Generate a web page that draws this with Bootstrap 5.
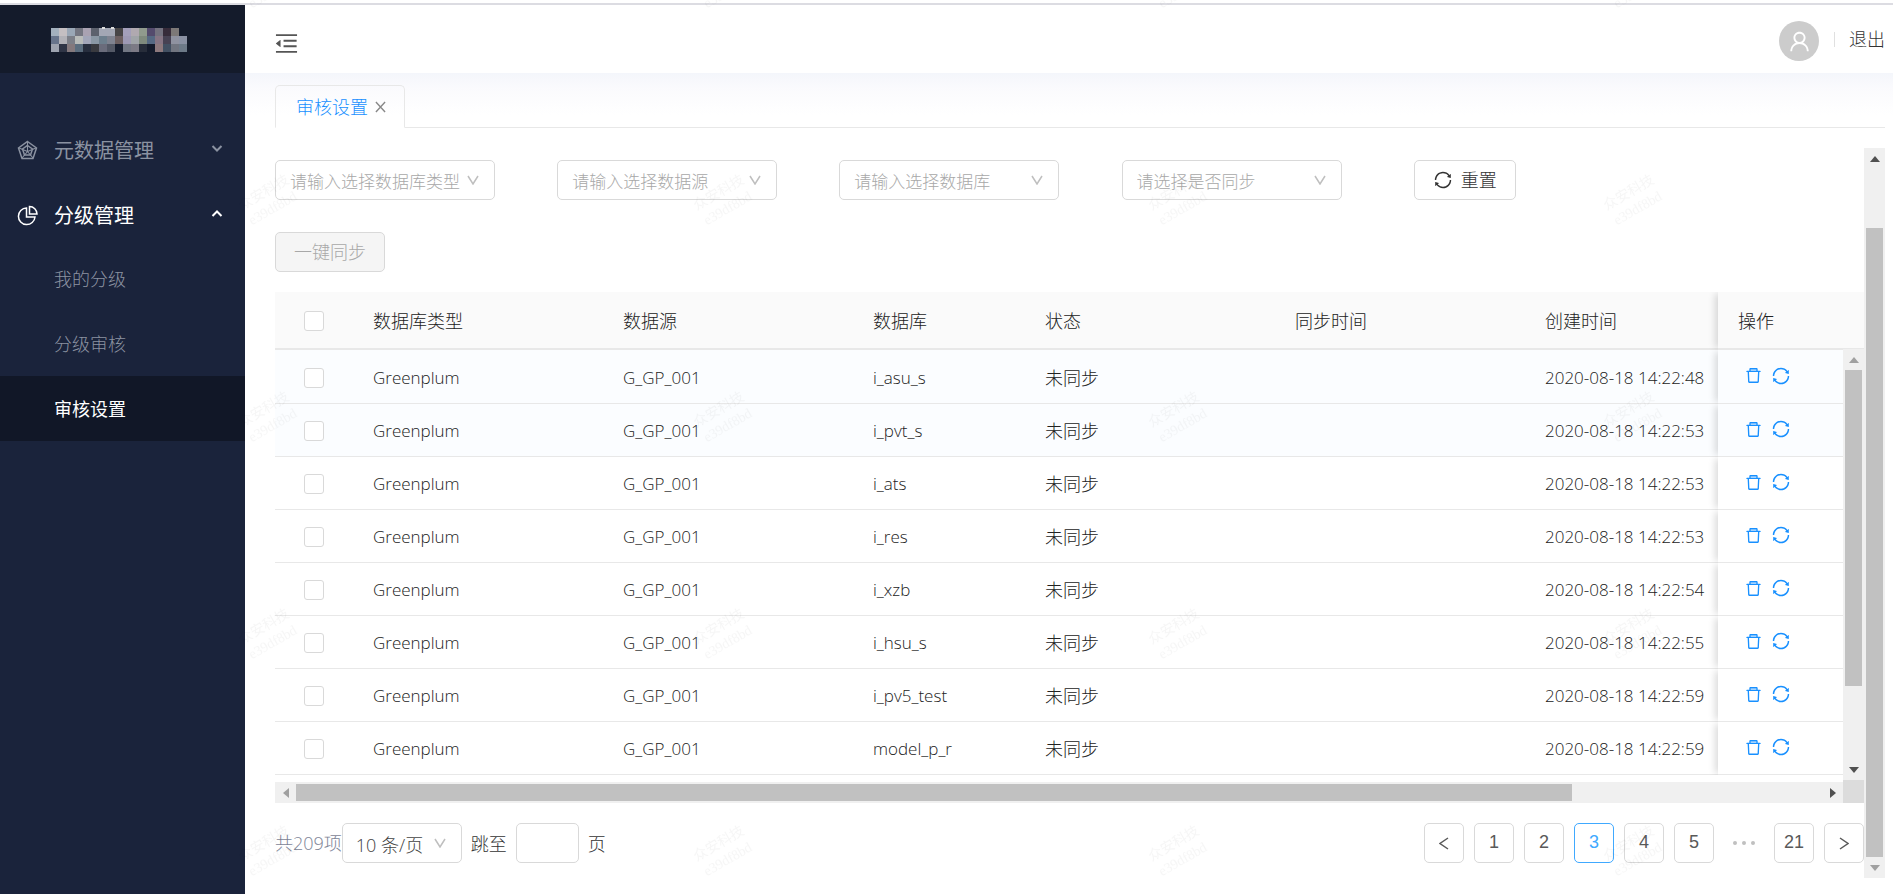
<!DOCTYPE html>
<html lang="zh-CN">
<head>
<meta charset="utf-8">
<meta name="viewport" content="width=device-width, initial-scale=1">
<title>审核设置</title>
<link href="https://cdn.jsdelivr.net/npm/bootstrap@5.3.0/dist/css/bootstrap.min.css" rel="stylesheet">
<style>
  :root { --line: #e8e8e8; --ctl: #d9d9d9; --blue: #1890ff; }
  body { font-family: "Open Sans", "Noto Sans CJK SC", sans-serif; font-size: 18px; font-weight: 300; line-height: 28px; color: #222; background: #fff; min-height: 100vh; overflow: hidden; }
  button, input, select { font: inherit; }
  svg { display: block; flex: none; }
  .app { min-height: 100vh; border-top: 2px solid #dcdce2; box-sizing: border-box; }
  .topgap { height: 3px; }
  .side { flex: 0 0 245px; background: #1a233b; }
  .brand { height: 68px; background: #141b2b; padding: 0 51px; }
  .menu { margin-top: 43px; }
  .menu a { height: 65px; padding: 0 22px 0 17px; color: #8b92a1; text-decoration: none; font-size: 18px; }
  .menu a.grp { font-size: 20px; font-weight: 400; padding-top: 4px; }
  .menu a.sub { padding-left: 54px; }
  .menu a.sel { background: #111727; }
  .menu a.on { color: #fff; font-weight: 400; }
  .mi { width: 37px; }
  .topbar { height: 68px; padding: 0 8px 0 28px; background: #fff; }
  .plain { border: 0; background: none; padding: 0; color: #555; }
  .avatar { width: 40px; height: 40px; border-radius: 50%; background: #ccc; color: #fff; }
  .vline { width: 1px; height: 15px; background: #e0e0e0; margin: 0 14px 0 15px; }
  .quit { color: #333; text-decoration: none; }
  .main { padding: 12px 8px 19px 30px; background: linear-gradient(#f4f6fb, #fafafd 14px, #fff 42px); }
  .tabs { border-bottom: 1px solid var(--line); height: 43px; }
  .tab1 { width: 130px; height: 43px; border: 1px solid var(--line); border-bottom-color: #fff; border-radius: 5px 5px 0 0; background: transparent; color: var(--blue); padding: 0 18px 0 20px; }
  .tab1 svg { color: #888; }
  .panel { margin-top: 20px; }
  .content { padding-top: 12px; }
  .filters { display: grid; grid-template-columns: repeat(4, 282fr) 460fr; }
  .ctl { height: 40px; border: 1px solid var(--ctl); border-radius: 5px; background-color: #fff; color: #444; padding: 0 14px; line-height: 38px; }
  select.ctl { padding: 2px 13px 0; appearance: none; background-image: url("data:image/svg+xml,%3Csvg xmlns='http://www.w3.org/2000/svg' width='12' height='10' fill='none' stroke='%23bfbfbf' stroke-width='1.5'%3E%3Cpath d='M1 1l5 8 5-8'/%3E%3C/svg%3E"); background-repeat: no-repeat; background-position: right 15px center; }
  select.pick { width: 220px; padding-left: 14px; font-size: 17px; color: #a8a8a8; }
  .resetbtn { margin-left: 10px; padding: 0 18px; color: #333; }
  .syncbtn { margin-top: 32px; width: 110px; background: #f5f5f5; color: #a8a8a8; }
  .gridbox { position: relative; margin-top: 20px; height: 490px; overflow: hidden; }
  .gridbox table { table-layout: fixed; width: 100%; border-collapse: separate; border-spacing: 0; }
  .gridbox th { height: 58px; background: #fafafa; border-bottom: 2px solid #e8e8e8; font-weight: 300; padding: 2px 20px 0; color: #222; }
  .gridbox td { height: 53px; border-bottom: 1px solid var(--line); padding: 2px 20px 0; font-size: 17px; white-space: nowrap; color: #222; }
  .gridbox tr:first-child td { height: 54px; }
  .gridbox td.st { font-size: 18px; }
  .gridbox tr.tint td { background: #fbfdff; }
  .gridbox .fixedcol { box-shadow: -5px 0 7px -2px rgba(0,0,0,.14); background: #fff; clip-path: inset(0 0 0 -12px); }
  .gridbox th.fixedcol { background: #fafafa; }
  .gridbox td.fixedcol { padding-left: 26px; }
  .gridbox td:first-child, .gridbox th:first-child { padding-left: 29px; }
  .tick { appearance: none; display: block; width: 20px; height: 20px; border: 1px solid var(--ctl); border-radius: 3px; background: #fff; margin: 0; }
  .act { color: var(--blue); border: 0; background: none; padding: 0; }
  .sb { background: #f0f0f0; color: #505050; }
  .sb-v { width: 21px; }
  .sb-h { height: 21px; }
  .sb .arr { width: 21px; height: 21px; flex: none; display: flex; align-items: center; justify-content: center; }
  .sb .dim { color: #a0a0a0; }
  .thumb { background: #c1c1c1; }
  .sb-v .thumb { width: 17px; }
  .sb-h .thumb { height: 17px; }
  .rail { position: absolute; right: 0; top: 57px; bottom: 2px; }
  .corner { width: 21px; height: 23px; background: #dcdcdc; margin-top: -2px; }
  .foot { margin-top: 20px; }
  .total { color: #7d8496; }
  .pg { width: 40px; height: 40px; padding: 0; font-family: "Liberation Sans", sans-serif; font-weight: 400; color: #595959; text-decoration: none; line-height: 36px; }
  .pg.now { border-color: #40a9ff; color: #40a9ff; }
  .joiner { margin: 0 9px; padding-top: 2px; color: #333; }
  .jump { width: 63px; }
  .wm { position: absolute; inset: 0; pointer-events: none; z-index: 5; }
</style>
</head>
<body>
<svg class="d-none">
  <symbol id="i-sync" viewBox="0 0 1024 1024"><path fill="currentColor" d="M168 504.2c1-43.7 10-86.1 26.9-126 17.3-41 42.1-77.7 73.7-109.4S337 212.3 378 195c42.4-17.9 87.4-27 133.9-27s91.5 9.1 133.8 27A341.5 341.5 0 0 1 755 268.8c9.9 9.9 19.2 20.4 27.8 31.4l-60.2 47a8 8 0 0 0 3 14.1l175.7 43c5 1.2 9.9-2.6 9.9-7.7l.8-180.9c0-6.7-7.7-10.5-12.9-6.3l-56.4 44.1C765.8 155.1 646.2 92 511.8 92 282.7 92 96.3 275.6 92 503.8a8 8 0 0 0 8 8.2h60c4.400 0 7.900-3.500 8-7.800zm756 7.800h-60c-4.400 0-7.900 3.500-8 7.800-1 43.700-10 86.100-26.900 126-17.300 41-42.100 77.800-73.700 109.400A342.450 342.450 0 0 1 512.100 856a342.240 342.240 0 0 1-243.200-100.800c-9.900-9.900-19.200-20.400-27.800-31.400l60.200-47a8 8 0 0 0-3-14.100l-175.700-43c-5-1.200-9.900 2.600-9.900 7.700l-.7 181c0 6.700 7.700 10.500 12.900 6.300l56.400-44.100C258.200 868.900 377.800 932 512.200 932c229.200 0 415.500-183.700 419.800-411.800a8 8 0 0 0-8-8.200z"/></symbol>
  <symbol id="i-del" viewBox="0 0 1024 1024"><path fill="currentColor" fill-opacity=".25" d="M352 184h320v72H352z"/><path fill="currentColor" d="M360 184h-8c4.400 0 8-3.600 8-8v8h304v-8c0 4.400 3.600 8 8 8h-8v72h72v-80c0-35.300-28.700-64-64-64H352c-35.300 0-64 28.700-64 64v80h72v-72zm504 72H160c-17.700 0-32 14.300-32 32v32c0 4.400 3.600 8 8 8h60.400l24.700 523c1.600 34.100 29.800 61 63.900 61h454c34.200 0 62.300-26.800 63.900-61l24.700-523H888c4.400 0 8-3.600 8-8v-32c0-17.700-14.300-32-32-32zM731.300 840H292.700l-24.200-512h487l-24.200 512z"/></symbol>
  <symbol id="i-up" viewBox="0 0 10 6"><path fill="currentColor" d="M5 0l5 6H0z"/></symbol>
  <symbol id="i-down" viewBox="0 0 10 6"><path fill="currentColor" d="M5 6l5-6H0z"/></symbol>
</svg>
<div class="topgap"></div>
<div class="app d-flex">
  <aside class="side">
    <div class="brand d-flex align-items-center">
      <svg id="mosaic" width="136" height="26" viewBox="0 -2 136 26" shape-rendering="crispEdges" aria-hidden="true"></svg>
    </div>
    <nav class="menu">
      <a href="#" class="grp d-flex align-items-center">
        <span class="mi"><svg width="21" height="21" viewBox="0 0 21 21" fill="none" stroke="currentColor" stroke-width="1.5"><path d="M10.500 1.500L19.500 8L16 18.500H5L1.500 8zM10.500 5.500L15.500 9L13.500 15H7.500L5.500 9z"/><path stroke-width="1.100" d="M10.500 2v9M19 8l-8.500 3.500M16 18l-5.500-6.500M5 18l5.500-6.500M2 8l8.500 3.500"/></svg></span>
        元数据管理
        <svg class="ms-auto mb-1" width="12" height="9" viewBox="0 0 12 9" fill="none" stroke="currentColor" stroke-width="2"><path d="M1.500 2L6 6.500 10.500 2"/></svg>
      </a>
      <a href="#" class="grp on d-flex align-items-center">
        <span class="mi"><svg width="21" height="21" viewBox="0 0 21 21" fill="none" stroke="currentColor" stroke-width="1.500"><path d="M9.500 3A8.300 8.300 0 1 0 18 12H9.500zM12.500 1.500V9H20A7.500 7.500 0 0 0 12.500 1.500z"/></svg></span>
        分级管理
        <svg class="ms-auto mb-1" width="12" height="9" viewBox="0 0 12 9" fill="none" stroke="currentColor" stroke-width="2"><path d="M1.500 7L6 2.500 10.500 7"/></svg>
      </a>
      <a href="#" class="sub d-flex align-items-center">我的分级</a>
      <a href="#" class="sub d-flex align-items-center">分级审核</a>
      <a href="#" class="sub sel on d-flex align-items-center">审核设置</a>
    </nav>
  </aside>
  <div class="flex-grow-1 d-flex flex-column">
    <header class="topbar d-flex align-items-center">
      <button class="plain me-auto mt-2" aria-label="收起菜单"><svg width="27" height="27" viewBox="0 0 1024 1024" fill="currentColor"><path d="M408 442h480c4.400 0 8-3.600 8-8v-56c0-4.400-3.600-8-8-8H408c-4.400 0-8 3.600-8 8v56c0 4.400 3.600 8 8 8zm-8 204c0 4.400 3.600 8 8 8h480c4.400 0 8-3.600 8-8v-56c0-4.400-3.600-8-8-8H408c-4.400 0-8 3.600-8 8v56zm504-486H120c-4.400 0-8 3.600-8 8v56c0 4.400 3.600 8 8 8h784c4.400 0 8-3.600 8-8v-56c0-4.400-3.600-8-8-8zm0 632H120c-4.400 0-8 3.600-8 8v56c0 4.400 3.600 8 8 8h784c4.400 0 8-3.600 8-8v-56c0-4.400-3.600-8-8-8zM115.400 518.900L271.700 642c5.800 4.600 14.400.5 14.400-6.900V388.900c0-7.400-8.500-11.500-14.400-6.900L115.400 505.100a8.740 8.740 0 0 0 0 13.800z"/></svg></button>
      <span class="avatar d-flex align-items-center justify-content-center mt-1"><svg width="25" height="25" viewBox="0 0 1024 1024" fill="currentColor"><path d="M858.500 763.600a374 374 0 0 0-80.600-119.500 375.630 375.630 0 0 0-119.500-80.600c-.4-.2-.8-.3-1.200-.5C719.500 518 760 444.700 760 362c0-137-111-248-248-248S264 225 264 362c0 82.700 40.500 156 102.800 201.100-.4.2-.8.3-1.200.5-44.800 18.900-85 46-119.500 80.600a375.630 375.630 0 0 0-80.600 119.500A371.700 371.700 0 0 0 136 901.800a8 8 0 0 0 8 8.200h60c4.400 0 7.900-3.500 8-7.800 2-77.200 33-149.500 87.800-204.300 56.700-56.700 132-87.900 212.200-87.900s155.500 31.200 212.200 87.900C779 752.700 810 825 812 902.200c.1 4.400 3.600 7.800 8 7.800h60a8 8 0 0 0 8-8.200c-1-47.800-10.900-94.300-29.500-138.200zM512 534c-45.900 0-89.100-17.900-121.600-50.400S340 407.900 340 362c0-45.900 17.900-89.100 50.400-121.600S466.100 190 512 190s89.100 17.900 121.600 50.400S684 316.100 684 362c0 45.900-17.900 89.100-50.400 121.600S557.900 534 512 534z"/></svg></span>
      <span class="vline"></span>
      <a href="#" class="quit">退出</a>
    </header>
    <main class="main flex-grow-1 d-flex flex-column">
      <div class="tabs">
        <button class="tab1 d-flex align-items-center justify-content-between">审核设置<svg width="11" height="12" viewBox="0 0 12 13" fill="none" stroke="currentColor" stroke-width="1.500"><path d="M1 1l10 11M11 1L1 12"/></svg></button>
      </div>
      <div class="panel d-flex flex-grow-1">
        <div class="content flex-grow-1">
          <div class="filters">
            <div><select class="ctl pick" aria-label="数据库类型"><option>请输入选择数据库类型</option></select></div>
            <div><select class="ctl pick" aria-label="数据源"><option>请输入选择数据源</option></select></div>
            <div><select class="ctl pick" aria-label="数据库"><option>请输入选择数据库</option></select></div>
            <div><select class="ctl pick" aria-label="是否同步"><option>请选择是否同步</option></select></div>
            <div><button class="ctl resetbtn d-flex align-items-center gap-2"><svg width="20" height="20"><use href="#i-sync"/></svg>重置</button></div>
          </div>
          <button class="ctl syncbtn d-block" disabled>一键同步</button>
          <div class="gridbox">
            <table>
              <colgroup><col style="width:78px"><col style="width:250px"><col style="width:250px"><col style="width:172px"><col style="width:250px"><col style="width:250px"><col><col style="width:146px"></colgroup>
              <thead><tr><th><input type="checkbox" class="tick" aria-label="全选"></th><th>数据库类型</th><th>数据源</th><th>数据库</th><th>状态</th><th>同步时间</th><th>创建时间</th><th class="fixedcol">操作</th></tr></thead>
              <tbody id="rows"></tbody>
            </table>
            <div class="rail sb sb-v d-flex flex-column align-items-center">
              <span class="arr dim"><svg width="10" height="6"><use href="#i-up"/></svg></span>
              <span class="thumb" style="height:73.4%"></span>
              <span class="arr mt-auto"><svg width="10" height="6"><use href="#i-down"/></svg></span>
            </div>
          </div>
          <div class="d-flex">
            <div class="sb sb-h d-flex align-items-center flex-grow-1">
              <span class="arr dim"><svg width="6" height="10" viewBox="0 0 6 10"><path fill="currentColor" d="M0 5l6-5v10z"/></svg></span>
              <span class="thumb" style="width:81.4%"></span>
              <span class="arr ms-auto"><svg width="6" height="10" viewBox="0 0 6 10"><path fill="currentColor" d="M6 5L0 0v10z"/></svg></span>
            </div>
            <div class="corner position-relative"></div>
          </div>
          <div class="foot d-flex align-items-center">
            <span class="total">共209项</span>
            <select class="ctl" style="width:120px" aria-label="每页条数"><option>10 条/页</option></select>
            <label for="jump" class="joiner">跳至</label>
            <input id="jump" class="ctl jump">
            <span class="joiner">页</span>
            <nav class="ms-auto d-flex" style="gap:10px" aria-label="分页">
              <a href="#" class="ctl pg d-flex align-items-center justify-content-center" aria-label="上一页"><svg width="10" height="13" viewBox="0 0 10 13" fill="none" stroke="currentColor" stroke-width="1.500"><path d="M9 1L1 6.500 9 12"/></svg></a>
              <a href="#" class="ctl pg text-center">1</a>
              <a href="#" class="ctl pg text-center">2</a>
              <a href="#" class="ctl pg now text-center">3</a>
              <a href="#" class="ctl pg text-center">4</a>
              <a href="#" class="ctl pg text-center">5</a>
              <span class="pg d-flex align-items-center justify-content-center"><svg width="24" height="6" fill="#c0c0c0"><circle cx="3" cy="3" r="2"/><circle cx="12" cy="3" r="2"/><circle cx="21" cy="3" r="2"/></svg></span>
              <a href="#" class="ctl pg text-center">21</a>
              <a href="#" class="ctl pg d-flex align-items-center justify-content-center" aria-label="下一页"><svg width="10" height="13" viewBox="0 0 10 13" fill="none" stroke="currentColor" stroke-width="1.500"><path d="M1 1l8 5.500L1 12"/></svg></a>
            </nav>
          </div>
        </div>
        <div class="sb sb-v d-flex flex-column align-items-center">
          <span class="arr"><svg width="10" height="6"><use href="#i-up"/></svg></span>
          <span class="thumb" style="height:86.1%;margin-top:auto"></span>
          <span class="arr dim"><svg width="10" height="6"><use href="#i-down"/></svg></span>
        </div>
      </div>
    </main>
  </div>
</div>
<svg class="wm" width="100%" height="100%" aria-hidden="true">
  <defs><pattern id="wmtile" width="455" height="217" patternUnits="userSpaceOnUse" x="212" y="92">
    <g transform="translate(56 108) rotate(-30)" text-anchor="middle" fill="#000" fill-opacity=".035"><text y="-4" font-size="14" font-weight="400">众安科技</text><text y="14" font-size="14" font-family="Liberation Serif, serif">e39df8bd</text></g>
  </pattern></defs>
  <rect x="210" width="100%" height="100%" fill="url(#wmtile)"/>
</svg>
<script src="https://cdn.jsdelivr.net/npm/bootstrap@5.3.0/dist/js/bootstrap.bundle.min.js"></script>
<script>
  // Records of the current page
  const rows = [
    ['i_asu_s', '48'], ['i_pvt_s', '53'], ['i_ats', '53'], ['i_res', '53'],
    ['i_xzb', '54'], ['i_hsu_s', '55'], ['i_pv5_test', '59'], ['model_p_r', '59']
  ];
  document.getElementById('rows').innerHTML = rows.map((r, i) => `
    <tr class="${i < 2 ? 'tint' : ''}">
      <td><input type="checkbox" class="tick" aria-label="选择 ${r[0]}"></td>
      <td>Greenplum</td><td>G_GP_001</td><td>${r[0]}</td><td class="st">未同步</td><td></td>
      <td>2020-08-18 14:22:${r[1]}</td>
      <td class="fixedcol"><div class="d-flex gap-2 pb-1">
        <button class="act" aria-label="删除"><svg width="19" height="19"><use href="#i-del"/></svg></button>
        <button class="act" aria-label="同步"><svg width="20" height="20"><use href="#i-sync"/></svg></button>
      </div></td>
    </tr>`).join('');

  // Pixelated logo
  const tiles = [
    'a3b0bd c4bfc2 9aa7b6 747681 a9a2b2 5c616d a3a7b4 a3a7b4 474546 a39fba b0a9b0 909a8d 544b6d 74727f 372c3a 7c7877 -',
    '67748b b1b1b7 7c7f88 b9bcba a2a6b9 8a97a4 6d7f8d 7f8390 6c5f60 9d99b4 a0a4a8 7f8a7d 566983 867584 474253 8f92a0 8a91a3',
    '9da3af 2f3546 84797d 5b6d7e 272e3e 393a3f 6a6c7b 545966 141b2b 727783 7c7a85 272d3a 141b2b 8d797d 425062 717580 6d7a88'
  ];
  document.getElementById('mosaic').innerHTML = tiles.map((line, y) => line.split(' ').map((c, x) =>
    c === '-' ? '' : `<rect x="${x * 8}" y="${y * 8}" width="8" height="8" fill="#${c}"/>`).join('')).join('')
    + '<rect x="51" y="-1" width="3" height="2" fill="#ddd"/><rect x="60" y="-1" width="3" height="2" fill="#ddd"/>';
</script>
</body>
</html>
